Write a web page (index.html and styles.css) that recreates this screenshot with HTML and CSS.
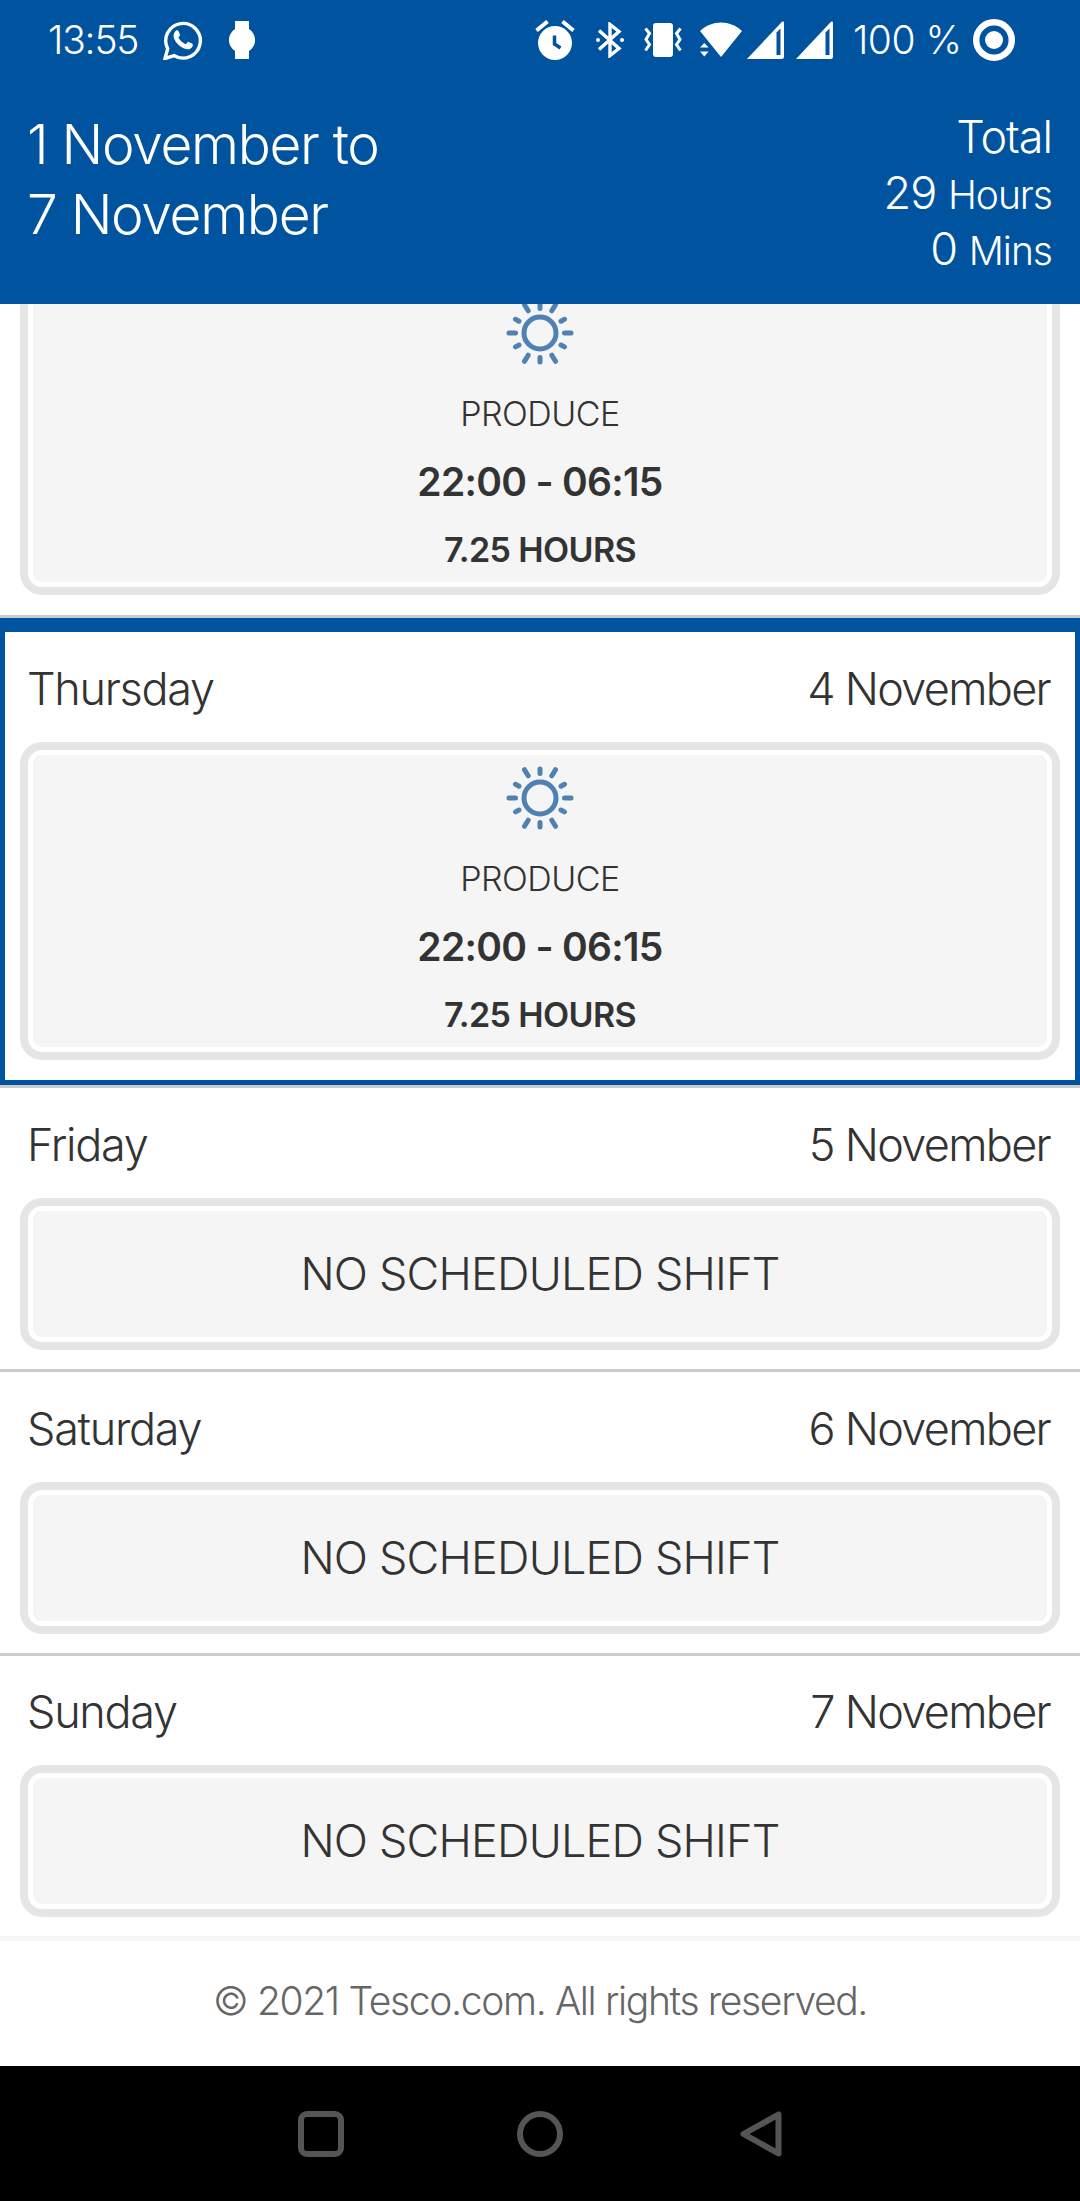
FILE: index.html
```
<!DOCTYPE html>
<html lang="en">
<head>
  <meta charset="UTF-8" />
  <title>My Schedule</title>
  <link rel="stylesheet" href="styles.css">
</head>
<body>

  <svg class="symbols">
    <symbol id="sun" viewBox="0 0 70 66">
      <circle cx="35" cy="33" r="16" />
      <path d="M59.500 33H66M4 33H10.500M35 8.500V4M35 57.500V62M46.800 10.800L50.500 4.700M23.200 10.800L19.500 4.700M46.800 55.200L50.500 61.300M23.200 55.200L19.500 61.300M56 21.200L59.500 19.300M14 21.200L10.500 19.300M56 45L59.500 46.900M14 45L10.500 46.900" />
    </symbol>
  </svg>

  <!-- Android status bar -->
  <div class="status-bar">
    <div class="status-left">
      <span class="clock">13:55</span>
      <svg class="whatsapp" width="40" height="40" viewBox="0 0 40 40">
        <path d="M2 38.500L4.700 28.700A17.300 17.300 0 1 1 11.400 35.700Z" fill="none" stroke="#fff" stroke-width="3.400" />
        <path d="M13.200 10.500c1-.5 2-.2 2.400.8l1.300 3.200c.3.800-.1 1.300-1.500 2.900 1.700 3.300 4 5.400 7.400 6.800 1.700-2.100 2-2.500 3-2.100l3.200 1.500c1 .5 1 1.200.6 2.600-.8 2.100-3 3.200-5.200 3.100-6.700-1-12.100-6.200-13.700-11.700-.5-2.500.4-5.800 2.500-7.100z" fill="#fff" />
      </svg>
      <svg class="watch" width="26" height="38" viewBox="0 0 26 38">
        <path d="M6 0H20V8A13 13 0 0 1 20 30V38H6V30A13 13 0 0 1 6 8Z" fill="#fff" />
      </svg>
    </div>
    <div class="status-right">
      <svg class="alarm" width="40" height="40" viewBox="0 0 40 40">
        <circle cx="20" cy="23" r="17" fill="#fff" />
        <path d="M1.500 10.500L12.500 1.500M38.500 10.500L27.500 1.500" stroke="#fff" stroke-width="4" />
        <path d="M19.500 15.500V24L25.500 28" fill="none" stroke="#00539f" stroke-width="3.500" />
      </svg>
      <svg class="bluetooth" width="30" height="36" viewBox="0 0 30 36">
        <path d="M4 8.500L24 26.500L15 33.500V2.500L24 9.500L4 27.500" fill="none" stroke="#fff" stroke-width="3.400" />
        <circle cx="3" cy="18" r="2" fill="#fff" />
        <circle cx="27" cy="18" r="2" fill="#fff" />
      </svg>
      <svg class="vibrate" width="38" height="36" viewBox="0 0 38 36">
        <rect x="9" y="1" width="20" height="34" rx="3" fill="#fff" />
        <path d="M1.500 6.500L5.500 11.500L2 17.500L5.500 22.500L1.500 28.500M36.500 6.500L32.500 11.500L36 17.500L32.500 22.500L36.500 28.500" fill="none" stroke="#fff" stroke-width="3" />
      </svg>
      <svg class="wifi" width="42" height="36" viewBox="0 0 42 36">
        <path d="M0 9C12-2.500 30-2.500 42 9L21 35Z" fill="#fff" />
        <path d="M-1 18H6L12 26L6 36H-1Z" fill="#00539f" />
        <path d="M0 25.500L4.300 21L8.600 25.500ZM0 29.500L4.300 34.500L8.600 29.500Z" fill="#fff" />
      </svg>
      <svg class="signal" width="37" height="38" viewBox="0 0 37 38">
        <path d="M0 38L35 .800Q37 0 37 2V35.500Q37 38 34.500 38Z" fill="#fff" />
        <path d="M29.500 11.500L33.500 7.500V34H29.500Z" fill="#00539f" />
      </svg>
      <svg class="signal second" width="37" height="38" viewBox="0 0 37 38">
        <path d="M0 38L35 .800Q37 0 37 2V35.500Q37 38 34.500 38Z" fill="#fff" />
        <path d="M29.500 11.500L33.500 7.500V34H29.500Z" fill="#00539f" />
      </svg>
      <span class="percent">100 %</span>
      <svg class="battery" width="42" height="42" viewBox="0 0 42 42">
        <circle cx="21" cy="21" r="17.800" fill="none" stroke="#fff" stroke-width="6.400" />
        <circle cx="21" cy="21" r="9" fill="#fff" />
      </svg>
    </div>
  </div>

  <!-- Week header -->
  <header class="week-header">
    <h1 class="week-range">1 November to<br>7 November</h1>
    <div class="week-total">
      <div class="total-label">Total</div>
      <div>29 <span class="unit">Hours</span></div>
      <div>0 <span class="unit">Mins</span></div>
    </div>
  </header>

  <!-- Days -->
  <main class="schedule">
    <section class="day scrolled">
      <div class="shift">
        <svg class="sun"><use href="#sun" /></svg>
        <div class="dept">PRODUCE</div>
        <div class="time">22:00 - 06:15</div>
        <div class="hours">7.25 HOURS</div>
      </div>
    </section>

    <section class="day today">
      <div class="day-title"><span>Thursday</span><span class="date">4 November</span></div>
      <div class="shift">
        <svg class="sun"><use href="#sun" /></svg>
        <div class="dept">PRODUCE</div>
        <div class="time">22:00 - 06:15</div>
        <div class="hours">7.25 HOURS</div>
      </div>
    </section>

    <section class="day">
      <div class="day-title"><span>Friday</span><span class="date">5 November</span></div>
      <div class="shift empty">NO SCHEDULED SHIFT</div>
    </section>

    <section class="day">
      <div class="day-title"><span>Saturday</span><span class="date">6 November</span></div>
      <div class="shift empty">NO SCHEDULED SHIFT</div>
    </section>

    <section class="day last">
      <div class="day-title"><span>Sunday</span><span class="date">7 November</span></div>
      <div class="shift empty">NO SCHEDULED SHIFT</div>
    </section>
  </main>

  <footer class="copyright">© 2021 Tesco.com. All rights reserved.</footer>

  <!-- Android navigation -->
  <nav class="nav-bar">
    <svg width="46" height="46" viewBox="0 0 46 46"><rect x="3" y="3" width="40" height="40" rx="6" /></svg>
    <svg width="46" height="46" viewBox="0 0 46 46"><circle cx="23" cy="23" r="20" /></svg>
    <svg width="46" height="46" viewBox="0 0 46 46"><path d="M42.500 3.500V42.500L7.500 23Z" /></svg>
  </nav>

</body>
</html>
```
FILE: styles.css
```
/* ===== Page ===== */
* {
  box-sizing: border-box;
}

body {
  margin: 0;
  width: 1080px;
  font-family: Inter, "Liberation Sans", sans-serif;
  font-weight: 300;
  background-color: #fff;
  color: #333;
}

svg {
  display: block;
  flex-shrink: 0;
}

.symbols {
  display: none;
}

/* ===== Status bar ===== */
.status-bar {
  display: flex;
  justify-content: space-between;
  height: 80px;
  padding: 0 65px 0 48px;
  background-color: #00539f;
  color: #fff;
  font-size: 39px;
  line-height: 80px;
}

.status-left,
.status-right {
  display: flex;
  align-items: center;
}

.clock {
  width: 115px;
  letter-spacing: -1.2px;
}

.watch {
  margin-left: 26px;
}

.bluetooth {
  margin-left: 20px;
}

.vibrate {
  margin-left: 19px;
}

.wifi {
  margin-left: 18px;
}

.signal {
  margin-left: 5px;
}

.signal.second {
  margin-left: 12px;
}

.percent {
  width: 120px;
  margin-left: 20px;
  letter-spacing: -0.5px;
  white-space: nowrap;
}

/* ===== Week header ===== */
.week-header {
  display: flex;
  justify-content: space-between;
  height: 224px;
  padding: 29px 28px 0 27px;
  background-color: #00539f;
  color: #fff;
}

.week-range {
  margin: 0;
  font-size: 55px;
  font-weight: 300;
  line-height: 70px;
  letter-spacing: -1.3px;
}

.week-total {
  font-size: 45px;
  line-height: 56px;
  letter-spacing: -1px;
  text-align: right;
}

.unit {
  font-size: 39px;
  line-height: 1;
}

/* ===== Day list ===== */
.schedule {
  height: 1632px;
  overflow: hidden;
}

.day {
  height: 284px;
  padding: 0 20px;
  border-bottom: 3px solid #ccc;
}

.day.scrolled {
  height: 341px;
  margin-top: -27px;
}

.day.today {
  height: 467px;
  margin-bottom: 3px;
  padding: 0 15px;
  border: 5px solid #00539f;
  border-top-width: 14px;
  box-shadow: 0 3px 0 #ccc;
}

.day.last {
  margin-top: -1px;
  border-bottom: none;
}

.day-title {
  display: flex;
  justify-content: space-between;
  height: 110px;
  padding: 29px 10px 0 7px;
  font-size: 45px;
  line-height: 56px;
  letter-spacing: -1.3px;
}

.date {
  letter-spacing: -1.7px;
}

/* ===== Shift card ===== */
.shift {
  display: flex;
  flex-direction: column;
  align-items: center;
  height: 318px;
  padding-top: 9px;
  border: 8px solid #e5e5e5;
  border-radius: 22px;
  background-color: #f5f5f5;
  box-shadow: inset 0 0 0 5px #fff;
}

.sun {
  width: 70px;
  height: 66px;
  margin-top: 6px;
  fill: none;
  stroke: #4f82b3;
  stroke-width: 5;
  stroke-linecap: round;
}

.dept {
  margin-top: 24px;
  font-size: 34px;
  line-height: 48px;
  letter-spacing: -0.5px;
}

.time {
  margin-top: 16px;
  font-size: 39px;
  font-weight: 600;
  line-height: 56px;
  letter-spacing: -0.7px;
}

.hours {
  margin-top: 16px;
  font-size: 34px;
  font-weight: 600;
  line-height: 48px;
  letter-spacing: -0.6px;
}

.shift.empty {
  justify-content: center;
  height: 152px;
  padding: 0 0 2px;
  font-size: 45px;
  letter-spacing: -0.8px;
}

/* ===== Footer ===== */
.copyright {
  height: 130px;
  padding-top: 32px;
  border-top: 5px solid #f5f5f5;
  color: #666;
  font-size: 39px;
  line-height: 56px;
  letter-spacing: -1.35px;
  text-align: center;
}

/* ===== Navigation bar ===== */
.nav-bar {
  display: flex;
  justify-content: center;
  align-items: center;
  gap: 173px;
  height: 135px;
  background-color: #000;
}

.nav-bar svg {
  fill: none;
  stroke: #555;
  stroke-width: 6;
  stroke-linejoin: round;
}
```
